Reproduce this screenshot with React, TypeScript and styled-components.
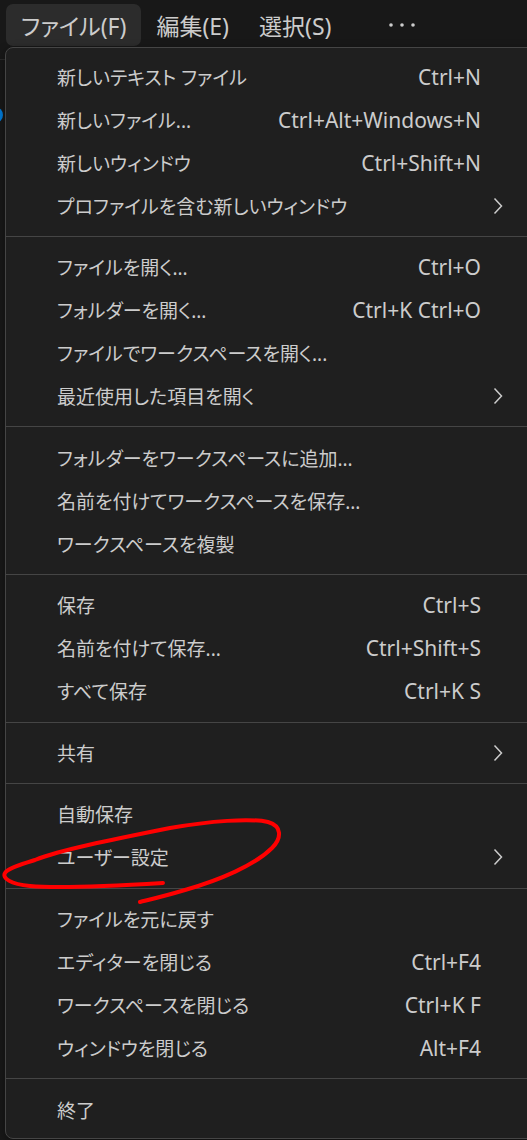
import React from "react";
import styled, { createGlobalStyle } from "styled-components";

const GlobalStyle = createGlobalStyle`
  html, body {
    margin: 0;
    padding: 0;
    background: #181818;
    overflow: hidden;
  }
  body {
    font-family: "Noto Sans", "Noto Sans CJK JP", sans-serif;
    font-feature-settings: "palt";
    color: #cccccc;
  }
`;

const Page = styled.div`
  position: relative;
  width: 527px;
  height: 1140px;
  overflow: hidden;
  background: #181818;
`;

const TitleBar = styled.div`
  display: flex;
  align-items: flex-start;
  height: 55px;
  padding: 4px 6px 0;
  border-bottom: 1px solid #2b2b2b;
`;

const MenuBarItem = styled.div<{ $active?: boolean }>`
  display: flex;
  align-items: center;
  height: 42px;
  padding: 0 15px;
  border-radius: 7px;
  font-size: 23px;
  color: #cccccc;
  background: ${(p) => (p.$active ? "#2c2c2c" : "transparent")};
`;

const DotsSvg = styled.svg`
  margin-left: 26px;
`;

const Workbench = styled.div`
  padding-top: 47px;
`;

const BlueDot = styled.div`
  width: 16px;
  height: 16px;
  margin-left: -13px;
  border-radius: 50%;
  background: #0078d4;
`;

const Menu = styled.div`
  position: absolute;
  left: 5px;
  top: 47px;
  width: 558px;
  padding: 7px 0;
  background: #1f1f1f;
  border: 1px solid #454545;
  border-radius: 8px;
  box-shadow: 0 2px 8px rgba(0, 0, 0, 0.36);
`;

const Row = styled.div`
  display: flex;
  align-items: center;
  height: 43px;
  padding-left: 51px;
  color: #cccccc;
`;

const Label = styled.span`
  flex: 1;
  font-size: 19px;
  white-space: nowrap;
`;

const Shortcut = styled.span`
  font-size: 21px;
  white-space: nowrap;
`;

const SubmenuSlot = styled.span`
  display: flex;
  align-items: center;
  width: 71px;
  padding-left: 12px;
`;

const Separator = styled.div`
  height: 1px;
  margin: 8.8px 0;
  background: #454545;
`;

const Annotation = styled.svg`
  position: absolute;
  left: 0;
  top: 810px;
  pointer-events: none;
`;

const Dots = () => (
  <DotsSvg width="30" height="6" viewBox="0 0 30 6">
    <circle cx="4" cy="3" r="1.8" fill="#cccccc" />
    <circle cx="15" cy="3" r="1.8" fill="#cccccc" />
    <circle cx="26" cy="3" r="1.8" fill="#cccccc" />
  </DotsSvg>
);

const Chevron = () => (
  <svg width="10" height="18" viewBox="0 0 10 18">
    <path d="M1.5 1.5 L8.5 9 L1.5 16.5" fill="none" stroke="#cccccc" strokeWidth="1.5" />
  </svg>
);

type Item = { label: string; key?: string; sub?: boolean };

const sections: Item[][] = [
  [
    { label: "新しいテキスト ファイル", key: "Ctrl+N" },
    { label: "新しいファイル...", key: "Ctrl+Alt+Windows+N" },
    { label: "新しいウィンドウ", key: "Ctrl+Shift+N" },
    { label: "プロファイルを含む新しいウィンドウ", sub: true },
  ],
  [
    { label: "ファイルを開く...", key: "Ctrl+O" },
    { label: "フォルダーを開く...", key: "Ctrl+K Ctrl+O" },
    { label: "ファイルでワークスペースを開く..." },
    { label: "最近使用した項目を開く", sub: true },
  ],
  [
    { label: "フォルダーをワークスペースに追加..." },
    { label: "名前を付けてワークスペースを保存..." },
    { label: "ワークスペースを複製" },
  ],
  [
    { label: "保存", key: "Ctrl+S" },
    { label: "名前を付けて保存...", key: "Ctrl+Shift+S" },
    { label: "すべて保存", key: "Ctrl+K S" },
  ],
  [{ label: "共有", sub: true }],
  [{ label: "自動保存" }, { label: "ユーザー設定", sub: true }],
  [
    { label: "ファイルを元に戻す" },
    { label: "エディターを閉じる", key: "Ctrl+F4" },
    { label: "ワークスペースを閉じる", key: "Ctrl+K F" },
    { label: "ウィンドウを閉じる", key: "Alt+F4" },
  ],
  [{ label: "終了" }],
];

export default function App() {
  return (
    <>
      <GlobalStyle />
      <Page>
        <TitleBar>
          <MenuBarItem $active>ファイル(F)</MenuBarItem>
          <MenuBarItem>編集(E)</MenuBarItem>
          <MenuBarItem>選択(S)</MenuBarItem>
          <MenuBarItem>
            <Dots />
          </MenuBarItem>
        </TitleBar>
        <Workbench>
          <BlueDot />
        </Workbench>

        <Menu>
          {sections.map((items, si) => (
            <React.Fragment key={si}>
              {si > 0 && <Separator />}
              {items.map((it) => (
                <Row key={it.label}>
                  <Label>{it.label}</Label>
                  {it.key && <Shortcut>{it.key}</Shortcut>}
                  <SubmenuSlot>{it.sub && <Chevron />}</SubmenuSlot>
                </Row>
              ))}
            </React.Fragment>
          ))}
        </Menu>

        <Annotation width="300" height="110" viewBox="0 0 300 110">
          <path
            d="M163 73 C130 75 60 79 30 76 C10 74 2 68 5 63 C8 58 20 55 35 50 C60 40 110 30 170 18 C210 11 250 8 268 12 C282 16 282 28 272 38 C255 55 220 70 185 80 C165 86 152 89 140 92"
            fill="none"
            stroke="#ff0000"
            strokeWidth="4"
            strokeLinecap="round"
            strokeLinejoin="round"
          />
        </Annotation>
      </Page>
    </>
  );
}
